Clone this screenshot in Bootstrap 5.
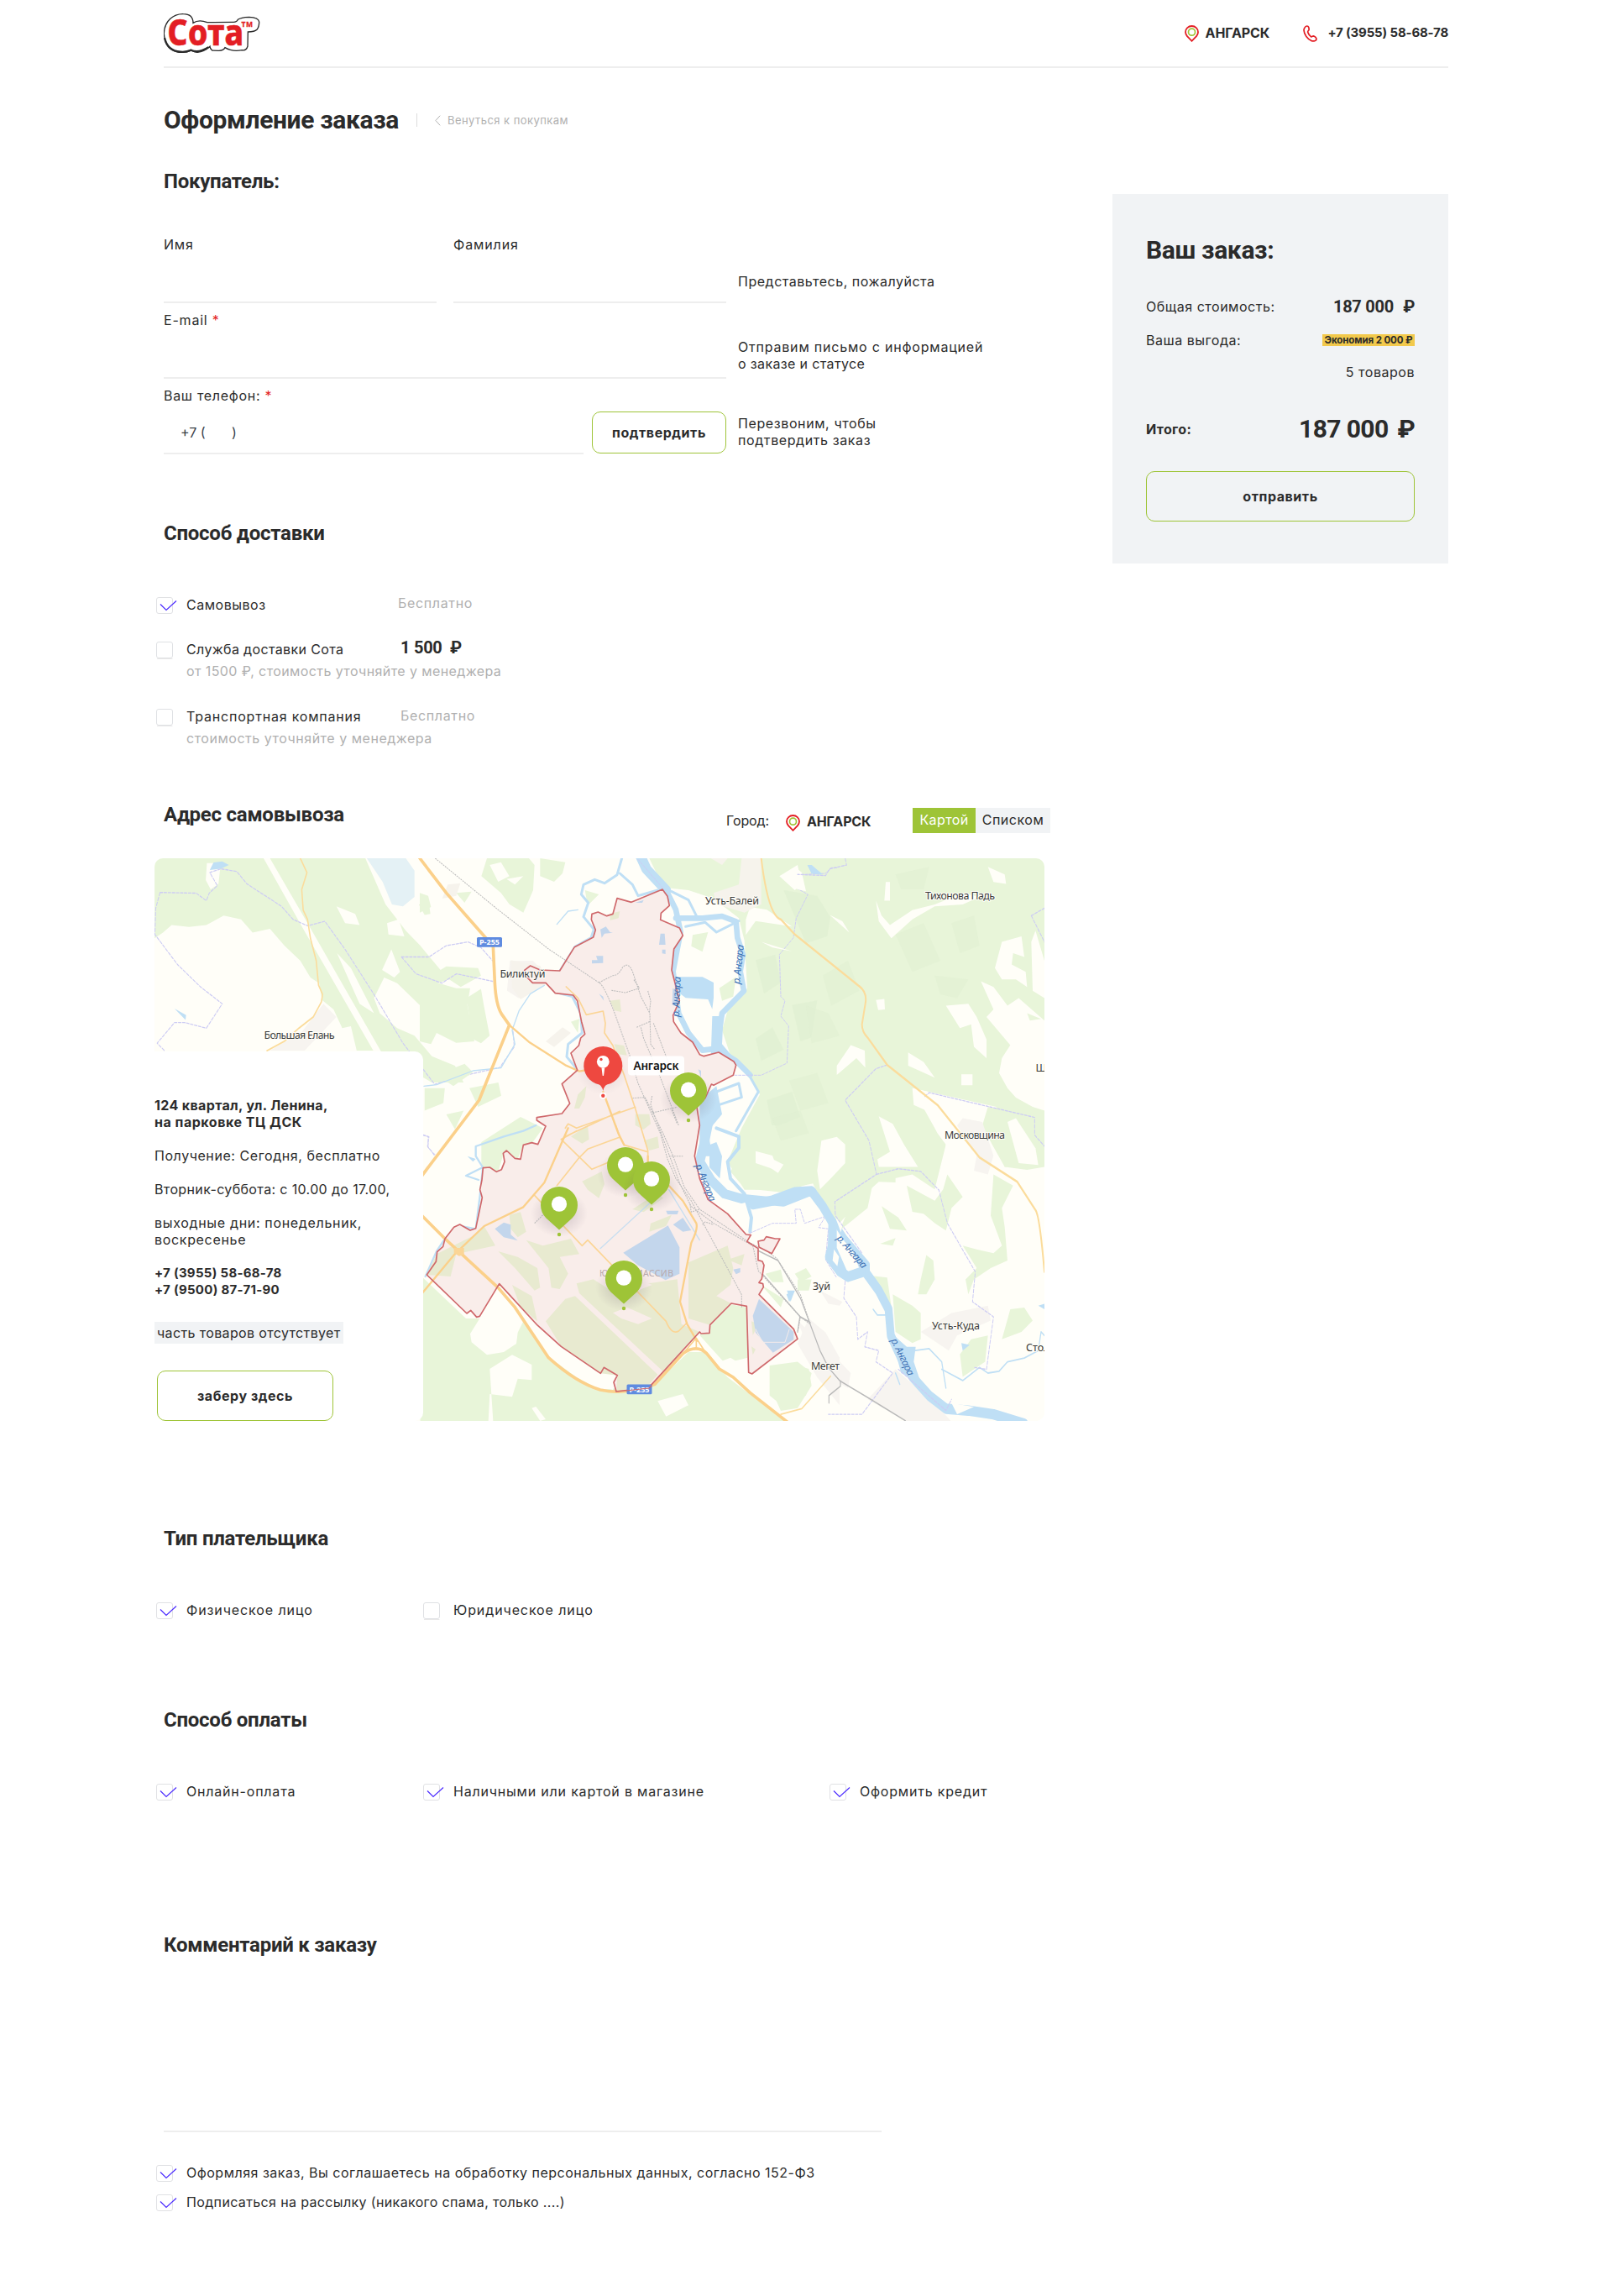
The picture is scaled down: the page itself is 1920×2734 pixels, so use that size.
<!DOCTYPE html>
<html lang="ru">
<head>
<meta charset="utf-8">
<meta name="viewport" content="width=device-width, initial-scale=1">
<title>Оформление заказа</title>
<link href="https://cdn.jsdelivr.net/npm/bootstrap@5.3.0/dist/css/bootstrap.min.css" rel="stylesheet">
<style>
:root{--ink:#2b2b2b;--lime:#9ec437;--line:#eee;--soft:#f1f3f5;--muted:#b0b0b0}
body{font-family:Inter,"Open Sans",sans-serif;font-size:16px;line-height:20px;letter-spacing:.52px;color:var(--ink);background:#fff;min-height:2734px}
.shell{width:1541px;margin-left:184px}
.topbar{height:81px;margin-left:11px;border-bottom:2px solid var(--line)}
.b{font-weight:700}
.city{letter-spacing:-.15px;font-weight:700;font-size:16px}
.topbar .city,.topbar .tel{padding-bottom:2px}
.tel{letter-spacing:-.15px;font-size:15px;font-weight:700;white-space:nowrap}
.store .tel{letter-spacing:.3px}
.tight{letter-spacing:.36px}.wide{letter-spacing:.8px}.wider{letter-spacing:.9px}.flat{letter-spacing:-.1px}
h1,h2,.rob{font-family:Roboto,sans-serif;font-weight:700;margin:0}
h1{font-size:30px;line-height:40px;letter-spacing:-.35px}
h2{font-size:24px;line-height:28px;letter-spacing:-.25px;margin-left:11px}
.rob{letter-spacing:-.26px;font-size:20px}
.back{color:var(--muted);font-size:13px;letter-spacing:.44px;text-decoration:none}
.vline{width:1px;height:16px;background:#ddd;margin:0 21px}
.titlebar{margin:42px 0 39px 11px;height:40px}
.main-col{width:1067px}
.order-form{margin:51px 0 80px 11px;display:flex;flex-direction:column;gap:10px}
.order-form>div{height:80px}
.fields{width:670px;gap:20px}
.hint{padding:44px 0 0 14px}
.hint.two{padding-top:32px}.hint.three{padding-top:33px}
.star{color:#e31e24}
.line-input{border:0;border-bottom:2px solid var(--line);border-radius:0;padding:0;background:none;color:#3b4248;letter-spacing:0;height:60px;line-height:20px}
.line-input.phone{padding:24px 0 14px 20px;width:500px}
textarea.line-input{display:block;width:855px;height:209px;margin-left:11px;resize:none}
.btn-lime{border:1.4px solid var(--lime);border-radius:10px;font-weight:700;color:var(--ink);letter-spacing:.55px;line-height:20px;padding:0;display:flex;align-items:center;justify-content:center}
.btn-confirm{width:160px;height:50px;margin-bottom:1px}
.btn-take{width:210px;height:60px;margin-left:3px}
.btn-send{height:60px;margin-top:40px}
.chk{display:flex;margin-left:2px;height:20px;line-height:18px}
.chk svg{flex:none;width:26px;height:22px;margin-right:10px;overflow:visible}
.c-name{width:253px}
.sub{margin:6px 0 0 38px;height:20px;line-height:18px;color:var(--muted);letter-spacing:.4px}
.free{color:var(--muted);letter-spacing:.65px}
.tab{height:30px;line-height:29px;border-radius:0;text-align:center;text-decoration:none;color:var(--ink)}
.tab-on{background:var(--lime);color:#fff;width:75px;letter-spacing:.37px}
.tab-off{background:var(--soft);width:89px}
.mapbox{position:relative;width:1060px;height:670px;margin-top:30px}
.mapbox>svg{display:block}
.store{position:absolute;left:0;top:230px;width:320px;height:440px;background:#fff;border-radius:0 10px 10px 0;padding:54px 0 0}
.store p{margin:0 0 20px;white-space:nowrap}
.store .tag{display:inline-block;background:var(--soft);height:26px;line-height:26px;margin:28px 0 32px;padding:0 3px;width:225px;letter-spacing:.36px;white-space:nowrap}
.summary{width:400px;height:440px;background:var(--soft);margin-top:150px;padding:47px 40px 0}
.save{background:#f2c94c;font-size:11.500px;line-height:14px;font-weight:700;letter-spacing:-.1px;width:110px;text-align:center;white-space:nowrap}
.total{font-size:30px!important;letter-spacing:-.6px!important}
.mt62{margin-top:62px}
.ml{font:400 12.5px "Noto Sans",sans-serif;fill:#3a3a3a;letter-spacing:0;paint-order:stroke;stroke:#fffef8;stroke-width:2px}
.rv{font:italic 400 12px "Noto Sans",sans-serif;fill:#3f73b5}
.rd{font:700 9px "Noto Sans",sans-serif;fill:#fff}
</style>
</head>
<body>
<svg width="0" height="0" class="position-absolute" aria-hidden="true"><defs>
<symbol id="pin-city" viewBox="0 0 17 20"><path d="M8.5 1C4.3 1 1 4.200 1 8.200c0 2 .9 3.500 2 5L8.500 18.800 14 13.200c1.100-1.500 2-3 2-5C16 4.200 12.700 1 8.500 1z" fill="none" stroke="#e31e24" stroke-width="1.800"/><circle cx="8.500" cy="8.200" r="4" fill="none" stroke="#9ec437" stroke-width="1.700"/></symbol>
<symbol id="box" viewBox="0 0 26 22"><rect x=".5" y=".5" width="19" height="19" rx="2.500" fill="#fff" stroke="#dfe1e4"/><path d="M1 20.500H19.500" stroke="#e8e8e8"/></symbol>
<symbol id="boxon" viewBox="0 0 26 22"><rect x=".5" y=".5" width="19" height="19" rx="2.500" fill="#fff" stroke="#e0e1e4"/><path d="M5 8.500 12 15.500 24 4.500" fill="none" stroke="#4b2bff" stroke-width="1.200"/></symbol>
<g id="gpin"><ellipse cx="0" cy="32" rx="34" ry="28" fill="url(#sh)"/><path d="M0 51.500-15.500 37.600A22 22 0 1 1 15.500 37.600Z" fill="#9ec437"/><circle cy="20.700" r="9.100" fill="#fff"/><circle cy="57" r="2.200" fill="#9ec437"/></g>
<radialGradient id="sh"><stop offset="0" stop-color="#5a4a60" stop-opacity=".28"/><stop offset="1" stop-color="#5a4a60" stop-opacity="0"/></radialGradient>
<clipPath id="mapclip"><rect width="1060" height="670" rx="10"/></clipPath>
</defs></svg>

<div class="shell">
<header class="topbar d-flex align-items-center">
  <svg width="116" height="50" viewBox="0 0 116 50" class="me-auto" role="img" aria-label="Сота">
    <path transform="translate(-15 -15) scale(.33333)" d="M46 120C47 75 80 49 115 50C138 50 150 60 150 82C165 72 180 72 200 80L292 79Q306 80 310 70Q320 62 350 61Q384 62 386 78Q386 96 378 106Q370 114 346 114L345 165Q340 182 325 179Q290 186 264 170Q258 182 240 181L218 180Q210 174 210 166Q190 185 165 187Q155 187 143 180Q125 189 100 187Q50 178 46 120Z" fill="#fff" stroke="#2b2b2b" stroke-width="4"/>
    <path transform="translate(-15 -15) scale(.33333)" d="M48 135Q58 182 105 185Q125 187 143 179Q168 192 205 169" fill="none" stroke="#2b2b2b" stroke-width="7"/>
    <text x="4.500" y="39.300" textLength="91" lengthAdjust="spacingAndGlyphs" font-family="Noto Sans, sans-serif" font-weight="800" font-size="43" fill="#e31e24" stroke="#e31e24" stroke-width=".6">Сота</text>
    <text x="92.500" y="17" textLength="14" lengthAdjust="spacingAndGlyphs" font-family="Noto Sans, sans-serif" font-weight="700" font-size="8.500" fill="#e31e24" stroke="#e31e24" stroke-width=".3">TM</text>
  </svg>
  <svg class="me-2" width="17" height="20"><use href="#pin-city"/></svg>
  <span class="city">АНГАРСК</span>
  <svg style="margin-left:40px;margin-right:12px" width="17" height="20" viewBox="0 0 17 20" fill="none" stroke="#e31e24" stroke-width="1.700" stroke-linejoin="round"><path d="M2.500 2.200C3.600.6 6 .6 6.600 2.300C7 3.600 7.600 5 6.800 6C6 7 5.300 7.300 5.800 8.600C6.500 10.600 8 12.700 9.600 13.700C10.600 14.300 11 13 12.300 12.800C13.600 12.700 16 15.200 16 16.600C15.800 18.800 12.500 19.400 10.200 18.600C5.400 16.800 1.200 10.800 1 6C.9 4.500 1.500 3.300 2.500 2.200Z"/></svg>
  <span class="tel text-end" style="width:144px">+7 (3955) 58-68-78</span>
</header>

<div class="d-flex justify-content-between align-items-start">
<main class="main-col">
  <div class="titlebar d-flex align-items-center">
    <h1>Оформление заказа</h1>
    <span class="vline"></span>
    <a href="#" class="back d-flex align-items-center gap-2"><svg width="7" height="13" viewBox="0 0 7 13" fill="none" stroke="#b0b0b0"><path d="M6.200.7.900 6.500l5.300 5.800"/></svg>Венуться к покупкам</a>
  </div>
  <h2>Покупатель:</h2>

  <form class="order-form">
    <div class="d-flex">
      <div class="fields d-flex">
        <label class="flex-fill w-50"><span class="d-block wide">Имя</span><input class="form-control line-input" aria-label="Имя"></label>
        <label class="flex-fill w-50"><span class="d-block wider">Фамилия</span><input class="form-control line-input" aria-label="Фамилия"></label>
      </div>
      <div class="hint">Представьтесь, пожалуйста</div>
    </div>
    <div class="d-flex">
      <label class="fields"><span class="d-block wide">E-mail <span class="star">*</span></span><input class="form-control line-input" aria-label="E-mail"></label>
      <div class="hint two wide">Отправим письмо с информацией<br><span class="tight">о заказе и статусе</span></div>
    </div>
    <div class="d-flex">
      <div class="fields">
        <label class="d-block" style="letter-spacing:.7px" for="ph">Ваш телефон: <span class="star">*</span></label>
        <div class="d-flex justify-content-between align-items-end">
          <input id="ph" class="form-control line-input phone" value="+7 (       )">
          <button type="button" class="btn btn-lime btn-confirm">подтвердить</button>
        </div>
      </div>
      <div class="hint three" style="letter-spacing:.6px">Перезвоним, чтобы<br>подтвердить заказ</div>
    </div>
  </form>

  <h2>Способ доставки</h2>
  <div class="chk mt62"><svg><use href="#boxon"/></svg><span class="c-name">Самовывоз</span><span class="free" style="margin:-2px 0 0 -1px">Бесплатно</span></div>
  <div class="chk" style="margin-top:33px"><svg><use href="#box"/></svg><span class="c-name tight">Служба доставки Сота</span><span class="rob" style="margin:-2px 0 0 2px">1 500 &nbsp;₽</span></div>
  <div class="sub">от 1500 ₽, стоимость уточняйте у менеджера</div>
  <div class="chk" style="margin-top:34px"><svg><use href="#box"/></svg><span class="c-name wide">Транспортная компания</span><span class="free" style="margin:-1px 0 0 2px">Бесплатно</span></div>
  <div class="sub" style="letter-spacing:.52px">стоимость уточняйте у менеджера</div>

  <div class="d-flex align-items-start" style="margin-top:66px;height:36px">
    <h2 style="width:670px">Адрес самовывоза</h2>
    <span class="flat" style="width:71px;margin-top:11px">Город:</span>
    <svg style="margin-top:14px" class="me-2" width="17" height="20"><use href="#pin-city"/></svg>
    <span class="city" style="width:126px;margin-top:12px">АНГАРСК</span>
    <div class="d-flex" style="margin-top:6px"><a class="tab tab-on">Картой</a><a class="tab tab-off">Списком</a></div>
  </div>

  <div class="mapbox">
    <svg width="1060" height="670" viewBox="0 0 1060 670" stroke-linejoin="round" stroke-linecap="round"><g clip-path="url(#mapclip)">
      <rect width="1060" height="670" fill="#fffef8"/>
      <!-- north-west forests -->
      <g transform="translate(-14 -12) scale(.34435 .44643)">
        <path fill="#e8f5d9" d="M41 27H770L840 150 880 190 910 220 960 260 1030 325 1050 315 1160 320 1170 340 1100 370 1060 350 1000 365 960 420 880 360 835 345 800 400 820 440 880 480 940 500 1000 555 1080 580 1110 625 1000 625 815 540H740L720 475 690 480 660 430 620 405 610 360 580 345 545 300 490 260 440 215 380 225 340 190 280 180 220 205 160 210 100 205 70 225 41 240Z"/>
        <path fill="#fffef8" d="M218 85 222 40 270 40 262 95 235 110ZM670 155 735 175 750 205 700 200ZM845 200 885 190 905 235 850 230ZM860 270 890 330 870 345 828 325ZM672 280 720 320 800 440 750 415ZM905 425 950 420 980 460 935 475ZM985 395 1020 410 1020 430 985 425ZM990 480 1035 445 1075 465 1025 510ZM418 27H440L570 200 830 550H805L555 215Z"/>
        <path fill="#e4f1f5" d="M775 27H910L940 60V130L900 155 862 150 830 90Z"/>
        <path fill="#bfdff5" d="M232 58 245 38 275 35 298 45 270 55ZM110 428 150 445 148 458Z"/>
        <path fill="#e8f5d9" d="M955 150 990 145 995 175 975 178ZM975 640H1045L1040 680 975 700ZM1120 400 1170 375 1180 420 1200 500 1170 520 1120 500 1090 465 1130 450ZM1130 640 1230 625 1240 660 1160 690ZM1050 710 1110 700 1080 750ZM960 1220 1130 1300 1140 1560 960 1560Z"/>
        <path fill="#f7f4f0" d="M625 415 670 450 560 540H440L550 490ZM1270 300 1350 300 1400 340 1300 400 1260 380Z"/>
        <g fill="none" stroke="#cdccf4" stroke-width="3" stroke-dasharray="9 5"><path d="M60 118 185 120 220 140 230 120 258 100 232 65 270 55 325 62 360 95 410 120 480 155 520 190 570 207 630 195 700 270 800 390 900 520 1010 630 1120 605 1235 585 1285 530 1280 480M60 118 45 160 42 230 120 310 200 370 275 415 220 480 145 465 110 465 50 520 75 540M895 290H990L1050 260 1125 250 1170 265 1210 300M895 290 945 335 1035 360 1085 335 1210 355M970 765 990 770 985 795 1010 820"/></g>
        <path fill="none" stroke="#fbdc9c" stroke-width="4.500" d="M545 27 568 65 550 110 555 165 570 190 580 240 600 300 608 365 622 390 618 410 590 450 540 480 490 515 430 540"/>
      </g>
      <!-- centre north, terrain and water -->
      <g transform="translate(316 -12) scale(.33333)">
        <path fill="#e8f5d9" d="M240 36H390L410 60 405 150 390 185 370 230 320 200 290 160 220 100ZM430 36 520 50 510 90 480 120 430 100ZM130 160 185 155 160 195ZM590 150 640 165 600 205ZM0 160 30 170 40 210 0 230ZM0 470 60 480 130 500 180 500 170 560 195 690 130 695 60 660 40 700 0 690ZM60 810 160 770 190 800 120 850ZM540 620 570 610 565 660ZM820 36H1700V1300H1500L1440 1190 1300 1220 1160 1220 1100 1120 1150 1000 1215 880 1160 790 1110 740 1080 650 1100 580 1170 500 1160 330 1140 250 1050 180 960 150 870 140ZM975 310 1030 300 1010 370 970 350ZM1070 500 1130 460 1120 530 1080 545ZM220 1050 360 960 440 1000 400 1055 370 1060 350 1110 300 1090 280 1155 220 1140Z"/>
        <path fill="#fffef8" d="M1165 255 1180 210 1240 220 1330 280 1200 260 1165 310ZM250 60 290 50 320 100 280 120ZM310 110 370 100 340 130ZM1285 100 1350 60 1365 130 1340 150Z"/>
        <path fill="#f6f3ec" d="M1150 36H1220V200L1160 230 1060 200 1050 160 1140 130ZM1040 36H1100L1080 60ZM325 400 430 420 460 480 360 540 330 500ZM450 690 510 640 540 660 480 710ZM100 130 145 125 130 170 80 180Z"/>
        <path fill="#e0efd2" opacity=".7" d="M1300 150 1420 170 1500 300 1380 340ZM1200 400 1270 380 1290 480 1230 520ZM1330 560 1440 540 1470 650 1360 690ZM1200 680 1260 640 1300 720 1220 760ZM1400 800 1500 760 1600 860 1440 900ZM1240 900 1330 870 1360 960 1260 1000ZM1550 420 1650 460 1580 520ZM1540 100 1640 120 1600 200Z"/>
        <g fill="none" stroke="#bfdff5"><path stroke-width="9" d="M722 36 705 95 660 125 625 112 585 130 577 165 602 195 585 245 622 290 612 320 555 352 500 440 450 450 485 515 545 530 575 590 580 660 530 700 525 745 562 790M715 90 760 130 780 170 850 150"/><path stroke-width="4" d="M490 272 530 225 565 220M445 490 395 520 355 580 330 650 340 700 290 785 190 795 60 845 15 850"/>
        <path stroke-width="36" d="M780 10 810 75 880 150"/><path stroke-width="20" d="M885 160 915 220 932 300 920 360 905 440 915 520 925 590 960 660 1010 722 1060 716 1130 760 1180 810M915 250H1010L1080 243 1130 262 1135 320 1155 380 1145 440 1158 510 1080 590 1060 720 1120 760"/><path stroke-width="9" d="M900 155 960 185 990 245M1140 260 1060 300 1020 265 950 280M1165 790 1210 870 1170 940 1130 1010M1060 870 1140 840 1150 890 1060 920Z"/></g>
        <path fill="#bfdff5" d="M905 460H1010L1050 480V535L1045 575 1030 540 950 535 905 500ZM1045 600 1085 600 1080 700 1130 760 1040 745ZM1000 900 1060 850 1080 950 1030 1010 1045 1100H1000ZM1385 60 1400 60 1435 95 1400 90Z"/>
        <g fill="none" stroke="#cdccf4" stroke-width="3" stroke-dasharray="9 5"><path d="M780 40 870 145M1125 811H1220L1312 768 1318 635 1290 600 1305 545 1290 530 1285 380 1335 320 1345 250 1387 165 1350 145 1350 95 1450 90 1470 70 1510 70"/></g>
      </g>
      <!-- south-centre terrain -->
      <g transform="translate(316 318) scale(.33333)">
        <path fill="#e8f5d9" d="M12 545 165 690 214 690 180 745 185 775 240 820 300 810 345 780 350 740 370 700 450 820 560 900 645 945 840 925 960 810 1020 810 1100 900 1310 1060H12ZM1040 715 1113 640 1168 650 1172 830 1090 850 1000 750ZM1250 930 1320 850 1390 870 1400 930 1350 1010 1290 1020ZM1235 530 1290 515 1300 560 1260 560ZM1220 570 1300 620 1290 650ZM1340 530 1380 510 1400 540 1360 560ZM1180 40 1170 0H1500V230L1400 205 1300 240 1160 225 1110 165Z"/>
        <path fill="#fffef8" d="M250 870 330 820 400 855V910L350 905 330 970 250 960 245 1056H262ZM400 1010 415 1005 450 1050 430 1056ZM510 860 640 895 700 905 690 945 600 920ZM850 985 940 960 960 1000 880 1040ZM1210 95 1300 140 1280 170 1220 130ZM1060 850 1110 830 1160 860 1150 880 1100 880Z"/>
        <path fill="#f7f4f0" d="M1390 690 1450 740 1500 830V1000L1420 900 1350 780Z"/>
        <g fill="none" stroke="#bfdff5"><path stroke-width="34" d="M1030-5 1015 70 1000 130 1040 195 1090 245 1150 262"/><path stroke-width="30" d="M1150 260 1300 275 1400 235 1450 265 1475 310 1475 440 1510 520"/><path stroke-width="12" d="M1060 10 1140 40 1140 80 1100 130 1110 190 1160 245 1185 330 1180 380"/><path stroke-width="7" d="M415 0 370 20 300 40 200 75 200 110 225 150 165 180 210 195M225 155 215 250 200 370 145 360 90 405 60 450 20 540"/></g>
        <path fill="#bfdff5" d="M1035 70 1060 60 1080 110 1072 190 1035 150ZM170 110 200 120 190 130ZM1312 590 1340 590 1325 630Z"/>
        <path fill="none" stroke="#cdccf4" stroke-width="3" stroke-dasharray="9 5" d="M1180 385 1260 350 1345 350 1340 300 1360 300 1375 350 1450 325 1425 365 1460 370 1450 480 1490 545M12 35 30 40 30 80 55 105"/>
      </g>
      <!-- eastern part -->
      <g transform="translate(716 -12) scale(.33333 .44643)">
        <path fill="#e8f5d9" d="M300 27H1032V1000L850 860 860 690 560 640 650 760 680 790 640 910 560 870 440 890 300 1000 240 950 205 895 200 500Z"/>
        <path fill="#fffef8" d="M560 640 620 650 720 680 860 735 890 850 1010 850 1032 830V1530H900L500 1400 300 1000 410 910 440 890 520 892 640 915 670 850 680 790 650 760 610 700 565 685ZM805 355 850 370 900 420 940 400 1032 460V700L990 690 930 665 900 640 870 600 880 560 910 525 870 490 825 450 850 430ZM90 75 140 50 165 65 180 115 150 110ZM430 140 450 180 480 205 560 165 640 150 740 120 800 130 740 150 640 155 560 190 485 240 440 195ZM465 90H480V140H460ZM830 50 890 70 895 95 850 90ZM880 250 950 235 960 290 920 280 915 310 965 330 970 370 930 350 880 350 855 320ZM985 250 1000 220 1032 300V400L990 380ZM680 420 760 415 790 450 825 510V560L780 530 770 470 730 480ZM430 405 460 402 462 430 438 432ZM545 545 600 570 640 612 545 580ZM735 603H775V632H735ZM340 525 390 540 392 585 360 560 290 605V580ZM235 780 290 770 320 790V840L270 880 230 910 220 860ZM440 715 490 735 530 790 580 850H440L435 830 480 810ZM0 840V808L60 820 80 860 40 850ZM265 178 310 195 335 225ZM20 250 130 275 60 265Z"/>
        <path fill="#e0efd2" opacity=".5" d="M500 230 600 200 660 300 560 330ZM640 340 760 350 720 400 660 390ZM240 340 330 300 370 380 270 420ZM180 420 260 440 300 500 200 520ZM500 70 620 50 600 110 520 110ZM120 620 220 600 260 680 160 700ZM700 200 780 180 800 260 730 280ZM60 720 160 700 190 760 90 780Z"/>
        <path fill="#e8f5d9" d="M830 690 1000 715 1032 780V850L970 858 890 850 845 790 810 740ZM685 870 740 930 700 960 680 1020 640 1000 600 975 560 970 540 900 640 940 670 910ZM450 955 510 985 540 1020 480 1015ZM610 1085 635 1100 640 1150 610 1190 580 1190 590 1150ZM850 870 920 900 880 960 890 1010 900 1100 840 1120 780 1150 760 1190 750 1150 790 1120 740 1060 790 1070 850 1080 880 1060 840 980ZM490 1190 560 1220 590 1240V1310L560 1320 500 1290ZM910 1230 960 1225 990 1260 950 1290 880 1310ZM770 1310 830 1300 820 1370 740 1410 730 1350ZM445 1055 500 1040 490 1060ZM50 1380 150 1370 200 1400 180 1460 100 1490 50 1460ZM150 1150 200 1150 190 1180 150 1180ZM300 1020 350 930 420 890 400 960ZM410 1140 470 1145 490 1250ZM970 440 1020 455 980 460Z"/>
        <path fill="#fffef8" d="M900 730 930 720 1000 800 1010 845 940 840Z"/>
        <path fill="#f7f4f0" d="M720 740 740 720 810 730 850 820 830 870 780 860 790 820ZM590 1290 700 1240 830 1220 840 1260 720 1300 690 1340ZM230 1180 310 1210 300 1220 260 1215ZM150 1260 250 1330 340 1400 330 1440 230 1400 170 1300ZM400 1470 500 1390 640 1480 700 1530H540Z"/>
        <path fill="none" stroke="#bfdff5" stroke-width="28" d="M-10 950 60 940 140 918 200 915 240 955 275 1000 272 1060 262 1090 300 1128 330 1143 390 1128 440 1180 475 1230 483 1300 520 1360 560 1410 620 1460 680 1495 760 1500 850 1510 960 1535"/>
        <path fill="none" stroke="#bfdff5" stroke-width="16" d="M285 1000 320 1040 400 1110 400 1140"/>
        <path fill="#bfdff5" d="M480 1290 540 1330 572 1330 565 1370 590 1425 520 1400ZM320 1030 400 1110 380 1140 350 1080ZM735 1320 765 1325 740 1340ZM185 45 200 45 240 70 200 68ZM1010 1220 1032 1215V1230ZM110 1190 140 1180 120 1210Z"/>
        <path fill="#fffef8" d="M280 1070 298 1090 292 1115 275 1100ZM285 985 310 1005 305 1025ZM700 1480 780 1490 720 1510Z"/>
        <path fill="none" stroke="#bfdff5" stroke-width="4" d="M570 1340 620 1335 665 1370 680 1440M665 1390 740 1420 800 1385 830 1400 870 1395 900 1370 960 1360 1010 1340 1020 1290 1032 1300M420 1230 435 1245 470 1245M500 1400 515 1430"/>
        <path fill="none" stroke="#cdccf4" stroke-width="3" stroke-dasharray="9 5" d="M470 578 430 588 320 672 405 780 432 870 283 943 285 980 380 1080M432 870 510 855 590 862 655 912 685 1000 785 1130 775 1210 850 1250 825 1390 780 1385M605 662 620 652 997 718V765L1032 795M320 1155 315 1200 360 1250 365 1310 400 1290 390 1330 440 1340 430 1370 490 1400 380 1510 260 1510M510 1390 680 1500 700 1470M320 27 325 45 265 55 250 73 150 70M985 180 1032 160M985 180 1032 250"/>
        <path fill="none" stroke="#b9b9b9" stroke-width="3.500" d="M0 1070 80 1100 160 1200 230 1340 260 1385 300 1420 400 1465 535 1527M0 1115 160 1250 195 1265M158 1250 150 1290M303 1420V1435L262 1460V1480"/>
        <path fill="none" stroke="#fbdc9c" stroke-width="6" d="M20 27Q45 180 90 190L140 230 370 368Q400 385 392 415L380 470Q380 490 400 505L470 578 650 685 800 825 935 890 1000 965Q1015 980 1032 1130"/>
        <path fill="none" stroke="#fbdc9c" stroke-width="4" d="M90 1510 165 1495 268 1408"/>
      </g>
      <!-- city district -->
      <g transform="translate(316 -12) scale(.33333)">
        <path fill="#f9edea" d="M867 147 756 193 705 179 690 235 668 242 637 228 615 235 613 255 628 292 620 318 553 353 500 438 430 435 395 420 374 436 380 458 403 481 450 481 484 518 548 525 563 545 578 620 590 664 575 678 568 705 540 732 563 793 508 842 536 912 508 948 418 962 418 972 450 993 422 1058 400 1052 370 1060 360 1111 340 1108 310 1080 298 1090 303 1120 292 1148 274 1156 250 1140 226 1142 222 1185 215 1220 223 1248 200 1358 180 1365 143 1344 122 1354 90 1395 83 1423 62 1442 58 1477 25 1524 168 1662 182 1651 203 1675 214 1672 284 1556 420 1704 505 1780 646 1876 658 1855 706 1883 693 1908 702 1941 818 1927 1000 1728 1005 1734 1035 1732 1037 1703 1113 1626 1168 1636 1175 1873 1187 1878 1350 1753 1336 1718 1212 1594 1228 1568 1226 1556 1212 1552 1222 1538 1230 1490 1224 1476 1209 1472V1430L1169 1405 1183 1382 1166 1380 1100 1306 1030 1255 1000 1180 982 1100 1000 990 990 925 1020 892 1042 843 1050 847 1120 811 1130 775 1122 762 1068 729 1015 743 1000 737 975 693 933 660 907 620 905 597 928 545 900 435 908 360 940 312 928 285 860 256 862 232 892 205 885 172Z"/>
        <path fill="#e8ead0" d="M680 235 715 225 710 250 680 258ZM680 545 715 540 720 585 695 580ZM695 700 730 705 740 740 705 735ZM565 880 595 850 590 890 570 930 552 930ZM540 1030 600 990 605 1040 580 1055ZM770 950 820 950 825 985 800 1005 770 990ZM800 1045 850 1030 855 1070 820 1080ZM580 1190 650 1155 660 1200 640 1250 600 1220ZM320 1310 360 1300 380 1370 350 1390 325 1360ZM25 1524 60 1450 200 1380 230 1350 270 1420 130 1450 110 1530ZM380 1400 440 1420 540 1395 570 1450 500 1460 530 1520 500 1575 470 1570 460 1500ZM280 1440 350 1460 420 1500 430 1570 410 1580 340 1500ZM330 1560 400 1600 420 1690 360 1640ZM450 1690 520 1610 555 1600 850 1880 815 1920 702 1940 706 1883 646 1876 505 1780ZM560 1555 620 1540 700 1590 780 1560 920 1540 935 1700 1000 1728 870 1870 570 1590ZM960 1480 1100 1420 1120 1500 1110 1560 1060 1600 1113 1626 1037 1703 960 1680ZM1100 1470 1160 1450 1150 1490ZM825 1340 900 1310 880 1350 820 1370ZM760 1290 850 1230 870 1250 800 1300ZM1185 1690 1210 1700 1190 1740ZM1185 1780 1200 1790 1190 1810Z"/>
        <path fill="#f9edea" d="M640 1480 830 1560 780 1580 700 1560ZM690 1660 740 1640 830 1680 780 1700 720 1680Z"/>
        <path fill="#c3d6ec" d="M645 290 665 280 680 300 690 302 660 305 650 320ZM630 385 655 385 655 410 615 412 615 400 635 400ZM860 305 875 305 878 345 855 345ZM866 362 878 362 878 378 866 376ZM904 500 920 510 918 565 902 560ZM640 520 655 530 658 545ZM727 1445 887 1348 928 1426V1520L878 1543 780 1490ZM1212 1610 1336 1728V1755L1262 1802 1200 1730 1190 1670ZM268 1360 300 1337 325 1345 325 1380 350 1402 300 1390ZM880 1295 925 1295 920 1308 885 1308ZM905 1345 940 1320 970 1365 940 1370ZM1120 1505 1145 1500 1145 1515 1130 1522ZM995 790 1005 795 1005 820ZM770 195 800 185 795 195Z"/>
        <path fill="none" stroke="#f5ecea" stroke-width="3" d="M1200 1718 1225 1765 1305 1765 1320 1720"/>
        <g fill="none" stroke="#bdbdbd" stroke-width="3.200" stroke-dasharray="6 3" stroke-linecap="butt"><path d="M55 36 280 220 460 360 640 480Q660 490 700 600L750 740 780 840 860 1020 885 1110 915 1180 970 1260 1150 1595V1640M640 480 690 455Q710 455 725 425 745 405 760 440L790 530 822 590 825 700 840 720M685 508 735 516 785 500M765 470 785 500M815 510 825 545 820 590M775 640 825 618M790 640 800 680 860 820 925 990M835 625 890 770M832 945 920 925M900 935 920 985M760 893 805 890M805 890 870 1020 905 1100 945 1210 1000 1290 1180 1410 1240 1440 1275 1465 1360 1595 1395 1700M830 885 825 915 835 945 930 1200 970 1280 1050 1340 1190 1420M890 1100H940M965 1270 970 1300 1000 1290M1190 1420 1210 1510 1360 1675M410 1340 440 1310M1010 1345 1020 1335 1050 1345M1360 1675 1395 1700M1360 1675 1350 1730"/></g>
        <g fill="none" stroke="#c8def0" stroke-width="4"><path d="M645 1430 830 1260M890 1220 1000 1400"/></g>
        <g fill="none" stroke="#fbd596" stroke-width="5"><path d="M523 495 565 535 595 595 655 582 663 625 660 660 690 705 730 810 770 930 815 1080 815 1140M520 1000 530 985 560 1000 770 925M505 1040 615 1147 680 1120M520 1030 715 940M490 1205 570 1105 600 1075 715 1032 700 990M715 1032 730 1060 815 1085M410 1240 580 1420 600 1400 880 1690Q900 1740 925 1725L955 1695M560 1010 505 1040"/></g>
        <g fill="none" stroke="#fbd08a" stroke-width="7"><path d="M320 632 390 692 520 775 570 797 600 792M655 870 710 1020 730 1060M0 1600 125 1450 230 1350 370 1282 410 1235 445 1195 530 1000M815 1100 815 1140 890 1205 940 1260 988 1340Q995 1360 970 1410L930 1620 955 1700 990 1760"/></g>
        <g fill="none" stroke="#fbd08a" stroke-width="11"><path d="M0 36 95 160 165 240 262 350 268 480Q272 560 292 592L320 632 212 900 0 1180M0 1305 90 1395 280 1570 340 1640 400 1730 460 1820Q560 1910 645 1935 740 1955 840 1915L940 1805Q990 1770 1025 1805L1070 1860 1120 1890 1180 1945 1320 2055"/></g>
        <path fill="#fbd596" d="M122 1428H158V1452L140 1457 122 1445Z"/><path fill="none" stroke="#fbd08a" stroke-width="5" d="M945 1800 988 1750 1020 1800M988 1750V1785"/>
        <path fill="none" stroke="#cf686b" stroke-width="5" d="M867 147 756 193 705 179 690 235 668 242 637 228 615 235 613 255 628 292 620 318 553 353 500 438 430 435 395 420 374 436 380 458 403 481 450 481 484 518 548 525 563 545 578 620 590 664 575 678 568 705 540 732 563 793 508 842 536 912 508 948 418 962 418 972 450 993 422 1058 400 1052 370 1060 360 1111 340 1108 310 1080 298 1090 303 1120 292 1148 274 1156 250 1140 226 1142 222 1185 215 1220 223 1248 200 1358 180 1365 143 1344 122 1354 90 1395 83 1423 62 1442 58 1477 25 1524 168 1662 182 1651 203 1675 214 1672 284 1556 420 1704 505 1780 646 1876 658 1855 706 1883 693 1908 702 1941 818 1927 1000 1728 1005 1734 1035 1732 1037 1703 1113 1626 1168 1636 1175 1873 1187 1878 1350 1753 1336 1718 1212 1594 1228 1568 1226 1556 1212 1552 1222 1538 1230 1490 1224 1476 1209 1472V1430L1169 1405 1183 1382 1166 1380 1100 1306 1030 1255 1000 1180 982 1100 1000 990 990 925 1020 892 1042 843 1050 847 1120 811 1130 775 1122 762 1068 729 1015 743 1000 737 975 693 933 660 907 620 905 597 928 545 900 435 908 360 940 312 928 285 860 256 862 232 892 205 885 172Z"/>
        <path fill="#f9edea" stroke="#cf686b" stroke-width="5" d="M1209 1404 1230 1400 1238 1388 1270 1395H1287L1258 1448 1212 1425Z"/>
      </g>
      <!-- labels -->
      <g class="ml">
        <text x="656" y="55" textLength="64">Усть-Балей</text><text x="411.500" y="142" textLength="54">Биликтуй</text><text x="130.500" y="214.500" textLength="84">Большая Елань</text><text x="918" y="48.500" textLength="83">Тихонова Падь</text><text x="1049.500" y="254">Ш</text><text x="941" y="333.500" textLength="72">Московщина</text><text x="784" y="514" textLength="21">Зуй</text><text x="782" y="608.500" textLength="34">Мегет</text><text x="926" y="560.500" textLength="57">Усть-Куда</text><text x="1038" y="587">Стол</text>
      </g>
      <text x="530" y="498" textLength="88" font-family="Noto Sans, sans-serif" font-size="10.500" fill="#b7a9ac" letter-spacing="0">ЮГО-В. МАССИВ</text>
      <g class="rv" letter-spacing="0">
        <text transform="translate(697 150) rotate(-84)" textLength="47">р. Ангара</text><text transform="translate(625 189) rotate(-88)" textLength="48">р. Ангара</text><text transform="translate(644 366) rotate(68)" textLength="47">р. Ангара</text><text transform="translate(812 453) rotate(49)" textLength="48">р. Ангара</text><text transform="translate(877 574) rotate(64)" textLength="48">р. Ангара</text>
      </g>
      <g class="rd" letter-spacing="0"><rect x="384" y="94" width="30" height="11.700" rx="1.500" fill="#5f8be0"/><text x="387" y="103" textLength="24">Р-255</text><rect x="562.500" y="626.500" width="30" height="11.700" rx="1.500" fill="#5f8be0"/><text x="565.500" y="635.500" textLength="24">Р-255</text><path d="M562 634 589 631 592 628" fill="none" stroke="#cf686b" stroke-width="1.200"/></g>
      <rect x="564" y="235.500" width="67" height="23" rx="4" fill="#fff" fill-opacity=".92"/>
      <text x="570.500" y="251.500" textLength="54" font-family="Noto Sans, sans-serif" font-size="13.500" font-weight="600" fill="#111" letter-spacing="0">Ангарск</text>
      <!-- pickup points -->
      <ellipse cx="534" cy="256" rx="30" ry="25" fill="url(#sh)" opacity=".5"/>
      <circle cx="534.300" cy="247" r="23" fill="#ee4840"/><path d="M526 267Q533 270 534.300 277 535.500 270 542.500 267Z" fill="#ee4840"/>
      <circle cx="534.300" cy="242.300" r="7.400" fill="#fff"/><path d="M532.500 249.500H536.300L535 259H533.700Z" fill="#fff"/><circle cx="532" cy="239.500" r="1.700" fill="#ee4840"/>
      <circle cx="534.300" cy="282.700" r="4" fill="#fff"/><circle cx="534.300" cy="282.700" r="2.200" fill="#ee4840"/>
      <use href="#gpin" x="636" y="255"/><use href="#gpin" x="561" y="344"/><use href="#gpin" x="592" y="361"/><use href="#gpin" x="482" y="391"/><use href="#gpin" x="559" y="479"/>
    </g></svg>
    <div class="store">
      <p class="b"><span class="tight">124 квартал, ул. Ленина,</span><br>на парковке ТЦ ДСК</p>
      <p style="letter-spacing:.57px">Получение: Сегодня, бесплатно</p>
      <p class="tight">Вторник-суббота: с 10.00 до 17.00,</p>
      <p style="letter-spacing:.67px">выходные дни: понедельник,<br>воскресенье</p>
      <p class="b tel m-0">+7 (3955) 58-68-78<br>+7 (9500) 87-71-90</p>
      <span class="tag">часть товаров отсутствует</span>
      <button type="button" class="btn btn-lime btn-take">заберу здесь</button>
    </div>
  </div>

  <h2 style="margin-top:126px">Тип плательщика</h2>
  <div class="d-flex mt62">
    <label class="chk wider" style="width:318px"><svg><use href="#boxon"/></svg>Физическое лицо</label>
    <label class="chk wider m-0"><svg><use href="#box"/></svg>Юридическое лицо</label>
  </div>

  <h2 style="margin-top:106px">Способ оплаты</h2>
  <div class="d-flex mt62">
    <label class="chk wide" style="width:318px"><svg><use href="#boxon"/></svg>Онлайн-оплата</label>
    <label class="chk wide m-0" style="width:484px"><svg><use href="#boxon"/></svg>Наличными или картой в магазине</label>
    <label class="chk wide m-0"><svg><use href="#boxon"/></svg>Оформить кредит</label>
  </div>

  <h2 style="margin-top:158px">Комментарий к заказу</h2>
  <textarea class="form-control line-input" aria-label="Комментарий"></textarea>
  <label class="chk" style="margin-top:39px;letter-spacing:.5px"><svg><use href="#boxon"/></svg>Оформляя заказ, Вы соглашаетесь на обработку персональных данных, согласно 152-ФЗ</label>
  <label class="chk tight" style="margin-top:15px"><svg><use href="#boxon"/></svg>Подписаться на рассылку (никакого спама, только ....)</label>
</main>

<aside class="summary">
  <h1>Ваш заказ:</h1>
  <div class="d-flex justify-content-between" style="margin-top:37px"><span>Общая стоимость:</span><span class="rob">187 000 &nbsp;&hairsp;₽</span></div>
  <div class="d-flex justify-content-between align-items-center" style="margin-top:20px"><span>Ваша выгода:</span><span class="save">Экономия 2 000 ₽</span></div>
  <div class="text-end" style="margin-top:18px">5 товаров</div>
  <div class="d-flex justify-content-between align-items-center" style="margin-top:48px"><span class="b tight">Итого:</span><span class="rob total">187 000<span class="ms-1"> ₽</span></span></div>
  <button type="button" class="btn btn-lime btn-send w-100">отправить</button>
</aside>
</div>
</div>
<script src="https://cdn.jsdelivr.net/npm/bootstrap@5.3.0/dist/js/bootstrap.bundle.min.js"></script>
</body>
</html>
